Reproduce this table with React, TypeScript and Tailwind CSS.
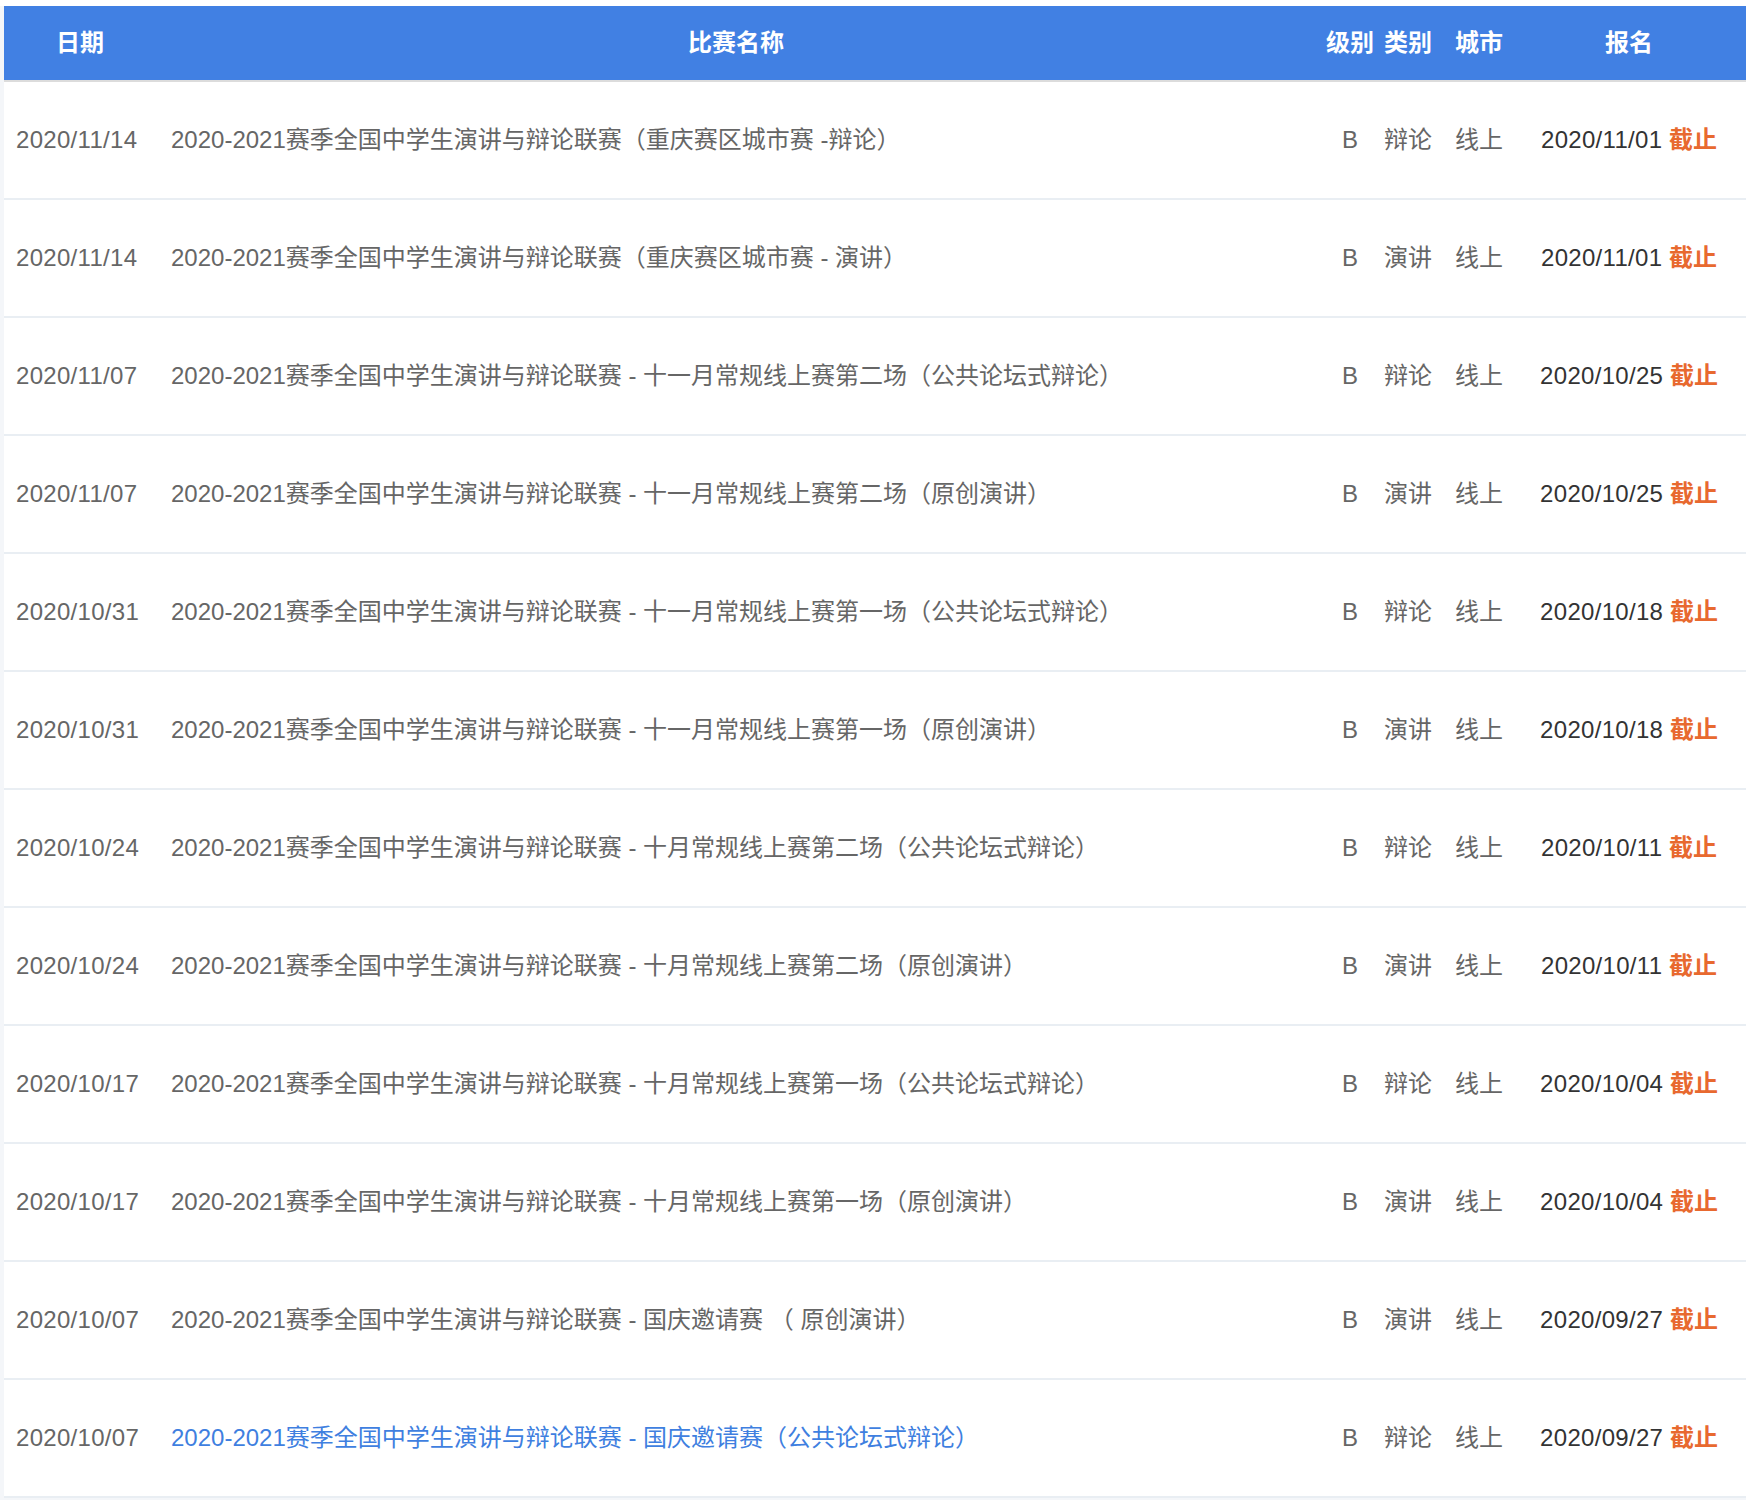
const rows = [
  {
    date: "2020/11/14",
    title: "2020-2021赛季全国中学生演讲与辩论联赛（重庆赛区城市赛 -辩论）",
    type: "辩论",
    deadline: "2020/11/01",
  },
  {
    date: "2020/11/14",
    title: "2020-2021赛季全国中学生演讲与辩论联赛（重庆赛区城市赛 - 演讲）",
    type: "演讲",
    deadline: "2020/11/01",
  },
  {
    date: "2020/11/07",
    title: "2020-2021赛季全国中学生演讲与辩论联赛 - 十一月常规线上赛第二场（公共论坛式辩论）",
    type: "辩论",
    deadline: "2020/10/25",
  },
  {
    date: "2020/11/07",
    title: "2020-2021赛季全国中学生演讲与辩论联赛 - 十一月常规线上赛第二场（原创演讲）",
    type: "演讲",
    deadline: "2020/10/25",
  },
  {
    date: "2020/10/31",
    title: "2020-2021赛季全国中学生演讲与辩论联赛 - 十一月常规线上赛第一场（公共论坛式辩论）",
    type: "辩论",
    deadline: "2020/10/18",
  },
  {
    date: "2020/10/31",
    title: "2020-2021赛季全国中学生演讲与辩论联赛 - 十一月常规线上赛第一场（原创演讲）",
    type: "演讲",
    deadline: "2020/10/18",
  },
  {
    date: "2020/10/24",
    title: "2020-2021赛季全国中学生演讲与辩论联赛 - 十月常规线上赛第二场（公共论坛式辩论）",
    type: "辩论",
    deadline: "2020/10/11",
  },
  {
    date: "2020/10/24",
    title: "2020-2021赛季全国中学生演讲与辩论联赛 - 十月常规线上赛第二场（原创演讲）",
    type: "演讲",
    deadline: "2020/10/11",
  },
  {
    date: "2020/10/17",
    title: "2020-2021赛季全国中学生演讲与辩论联赛 - 十月常规线上赛第一场（公共论坛式辩论）",
    type: "辩论",
    deadline: "2020/10/04",
  },
  {
    date: "2020/10/17",
    title: "2020-2021赛季全国中学生演讲与辩论联赛 - 十月常规线上赛第一场（原创演讲）",
    type: "演讲",
    deadline: "2020/10/04",
  },
  {
    date: "2020/10/07",
    title: "2020-2021赛季全国中学生演讲与辩论联赛 - 国庆邀请赛 （ 原创演讲）",
    type: "演讲",
    deadline: "2020/09/27",
  },
  {
    date: "2020/10/07",
    title: "2020-2021赛季全国中学生演讲与辩论联赛 - 国庆邀请赛（公共论坛式辩论）",
    type: "辩论",
    deadline: "2020/09/27",
    link: true,
  },
];

const font = {
  fontFamily: '"Liberation Sans", "Noto Sans CJK SC", sans-serif',
};

export default function App() {
  return (
    <div className="min-h-[1500px] bg-white pt-[6px]" style={font}>
      <div className="bg-[#f4f6f9] pl-[4px] pb-[4px]">
        <div className="bg-white">
          <div className="flex h-[76px] items-center whitespace-nowrap border-b-2 border-[#dcdcdc] bg-[#4180e3] text-[24px] font-bold text-white">
            <div className="w-[152px] text-center">日期</div>
            <div className="w-[1160px] text-center">比赛名称</div>
            <div className="w-[68px] text-center">级别</div>
            <div className="w-[46px] text-center">类别</div>
            <div className="w-[98px] text-center">城市</div>
            <div className="flex-1 pr-[16px] text-center">报名</div>
          </div>
          {rows.map((row, i) => (
            <div
              key={i}
              className="flex h-[118px] items-center whitespace-nowrap border-b-2 border-[#e9eef3] text-[24px] text-[#666]"
            >
              <div className="w-[152px] pl-[12px] tracking-[0.3px]">
                {row.date}
              </div>
              <div
                className={`w-[1160px] pl-[15px] ${row.link ? "text-[#3f7fe0]" : ""}`}
              >
                {row.title}
              </div>
              <div className="w-[68px] text-center">B</div>
              <div className="w-[46px] text-center">{row.type}</div>
              <div className="w-[98px] text-center">线上</div>
              <div className="flex-1 pr-[16px] text-center">
                <span className="tracking-[0.3px] text-[#333]">
                  {row.deadline}
                </span>{" "}
                <span className="font-bold text-[#e8692f]">截止</span>
              </div>
            </div>
          ))}
        </div>
      </div>
    </div>
  );
}
